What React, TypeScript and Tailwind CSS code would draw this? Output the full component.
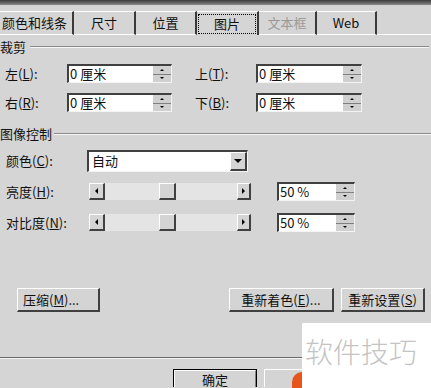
import React from "react";

const font = "font-['SimSun','Noto_Sans_CJK_SC','Liberation_Sans',sans-serif]";

const Mn = ({ k }: { k: string }) => (
  <span>
    (<span className="underline">{k}</span>)
  </span>
);

// spin box with up/down buttons
const SpinBox = ({ value, w }: { value: string; w: string }) => (
  <div
    className={`${w} h-[19px] flex bg-white border-t-2 border-l-2 border-t-[#404040] border-l-[#404040] border-b border-r border-b-[#f4f4f4] border-r-[#f4f4f4]`}
  >
    <div className="flex-1 text-[13px] leading-[16px] pl-[1px] text-[#111]">{value}</div>
    <div className="w-[18px] flex flex-col">
      <div className="flex-1 bg-[#d0d0d0] border-b border-[#808080] flex items-center justify-center">
        <div className="w-0 h-0 border-l-[2px] border-r-[2px] border-b-[2px] border-l-transparent border-r-transparent border-b-black" />
      </div>
      <div className="flex-1 bg-[#d0d0d0] flex items-center justify-center">
        <div className="w-0 h-0 border-l-[2px] border-r-[2px] border-t-[2px] border-l-transparent border-r-transparent border-t-black" />
      </div>
    </div>
  </div>
);

const Raised = ({ className, children }: { className?: string; children?: React.ReactNode }) => (
  <div
    className={`bg-[#d4d4d4] border-t border-l border-t-white border-l-white border-b-2 border-r-2 border-b-[#404040] border-r-[#404040] flex items-center justify-center ${className ?? ""}`}
  >
    {children}
  </div>
);

const Slider = () => (
  <div className="w-[162px] h-[17px] flex bg-[#e4e4e4]">
    <Raised className="w-[16px] h-full">
      <div className="w-0 h-0 border-t-[3px] border-b-[3px] border-r-[3px] border-t-transparent border-b-transparent border-r-black" />
    </Raised>
    <div className="w-[54px]" />
    <Raised className="w-[17px] h-full" />
    <div className="flex-1" />
    <Raised className="w-[14px] h-full">
      <div className="w-0 h-0 border-t-[3px] border-b-[3px] border-l-[3px] border-t-transparent border-b-transparent border-l-black" />
    </Raised>
  </div>
);

const GroupTitle = ({ title, pad }: { title: string; pad: string }) => (
  <div className="flex items-center h-[14px]">
    <span className={`text-[13px] leading-[14px] ${pad}`}>{title}</span>
    <div className="flex-1 border-t border-b border-t-[#8a8a8a] border-b-[#f6f6f6]" />
  </div>
);

const Tab = ({ label, w, active, disabled }: { label: string; w: string; active?: boolean; disabled?: boolean }) => (
  <div
    className={`${w} h-full flex items-center justify-center border-t border-t-white border-r-2 border-r-[#3a3a3a] ${
      active ? "" : "border-b border-b-white"
    }`}
  >
    <span
      className={`text-[13px] leading-[16px] px-[5px] ${active ? "outline-1 outline-dotted outline-black py-[1px] px-[15px]" : ""} ${
        disabled ? "text-[#9a9a9a]" : "text-[#111]"
      }`}
    >
      {label}
    </span>
  </div>
);

export default function App() {
  return (
    <div className={`relative w-[431px] h-[388px] overflow-hidden bg-[#d5d5d5] text-[#111] ${font}`}>
      {/* title strip */}
      <div className="h-[5px] bg-gradient-to-b from-[#3c3c3c] to-[#8a8a8a]" />

      {/* tabs */}
      <div className="flex h-[30px] pt-[6px] items-stretch">
        <Tab label="颜色和线条" w="w-[77px] -ml-[3px]" />
        <Tab label="尺寸" w="w-[62px]" />
        <Tab label="位置" w="w-[61px]" />
        <Tab label="图片" w="w-[62px]" active />
        <Tab label="文本框" w="w-[58px]" disabled />
        <Tab label="Web" w="w-[60px]" />
        <div className="flex-1 border-b border-b-white" />
      </div>

      {/* crop group */}
      <div className="mt-[5px] pr-[2px]">
        <GroupTitle title="裁剪" pad="pr-[4px]" />
      </div>

      <div className="mt-[10px] flex flex-col gap-[10px]">
        <div className="flex items-center h-[19px]">
          <span className="w-[67px] pl-[5px] text-[13px]">左<Mn k="L" />:</span>
          <SpinBox value="0 厘米" w="w-[105px]" />
          <span className="w-[84px] pl-[23px] text-[13px]">上<Mn k="T" />:</span>
          <SpinBox value="0 厘米" w="w-[106px]" />
        </div>
        <div className="flex items-center h-[19px]">
          <span className="w-[67px] pl-[5px] text-[13px]">右<Mn k="R" />:</span>
          <SpinBox value="0 厘米" w="w-[105px]" />
          <span className="w-[84px] pl-[23px] text-[13px]">下<Mn k="B" />:</span>
          <SpinBox value="0 厘米" w="w-[106px]" />
        </div>
      </div>

      {/* image control group */}
      <div className="mt-[15px]">
        <GroupTitle title="图像控制" pad="pr-[2px]" />
      </div>

      <div className="mt-[9px] flex items-center h-[22px]">
        <span className="w-[87px] pl-[6px] text-[13px]">颜色<Mn k="C" />:</span>
        <div className="w-[161px] h-[22px] flex bg-white border-t-2 border-l-2 border-t-[#404040] border-l-[#404040] border-b border-r border-b-[#f4f4f4] border-r-[#f4f4f4]">
          <div className="flex-1 text-[13px] leading-[18px] pl-[3px]">自动</div>
          <Raised className="w-[17px] h-full">
            <div className="w-0 h-0 border-l-[4px] border-r-[4px] border-t-[4px] border-l-transparent border-r-transparent border-t-black" />
          </Raised>
        </div>
      </div>

      <div className="mt-[10px] flex items-center h-[19px]">
        <span className="w-[89px] pl-[6px] text-[13px]">亮度<Mn k="H" />:</span>
        <Slider />
        <div className="w-[26px]" />
        <SpinBox value="50 %" w="w-[78px]" />
      </div>

      <div className="mt-[12px] flex items-center h-[19px]">
        <span className="w-[89px] pl-[6px] text-[13px]">对比度<Mn k="N" />:</span>
        <Slider />
        <div className="w-[26px]" />
        <SpinBox value="50 %" w="w-[78px]" />
      </div>

      {/* action buttons */}
      <div className="mt-[56px] flex items-center h-[24px]">
        <div className="w-[17px]" />
        <Raised className="w-[83px] h-[24px] text-[13px] justify-start pl-[5px]">
          压缩<Mn k="M" />...
        </Raised>
        <div className="w-[129px]" />
        <Raised className="w-[105px] h-[24px] text-[13px]">
          重新着色<Mn k="E" />...
        </Raised>
        <div className="w-[7px]" />
        <Raised className="w-[84px] h-[24px] text-[13px]">
          重新设置<Mn k="S" />
        </Raised>
      </div>

      {/* separator */}
      <div className="mt-[45px] border-t border-b border-t-[#6a6a6a] border-b-[#f4f4f4]" />

      {/* bottom buttons */}
      <div className="mt-[10px] flex h-[18px]">
        <div className="w-[173px]" />
        <div className="w-[84px] h-[18px] border border-b-0 border-black bg-[#d4d4d4]">
          <div className="w-full h-full border-t border-l border-t-white border-l-white border-r border-r-[#808080] text-[13px] leading-[15px] pt-[1px] text-center">
            确定
          </div>
        </div>
        <div className="w-[7px]" />
        <div className="w-[84px] h-[18px] bg-[#d4d4d4] border-t border-l border-t-white border-l-white border-r-2 border-r-[#404040]" />
      </div>

      {/* watermark overlay */}
      <div className="absolute left-[292px] top-[372px] w-[20px] h-[24px] rounded-tl-[10px] bg-[#e8551a]" />
      <div className="absolute left-[302px] top-[323px] w-[129px] h-[65px] bg-white flex items-start pl-[3px] pt-[12px]">
        <span className="text-[28px] leading-[32px] text-[#c4c4c4] font-['Noto_Sans_CJK_SC',sans-serif] font-light">
          软件技巧
        </span>
      </div>
    </div>
  );
}
